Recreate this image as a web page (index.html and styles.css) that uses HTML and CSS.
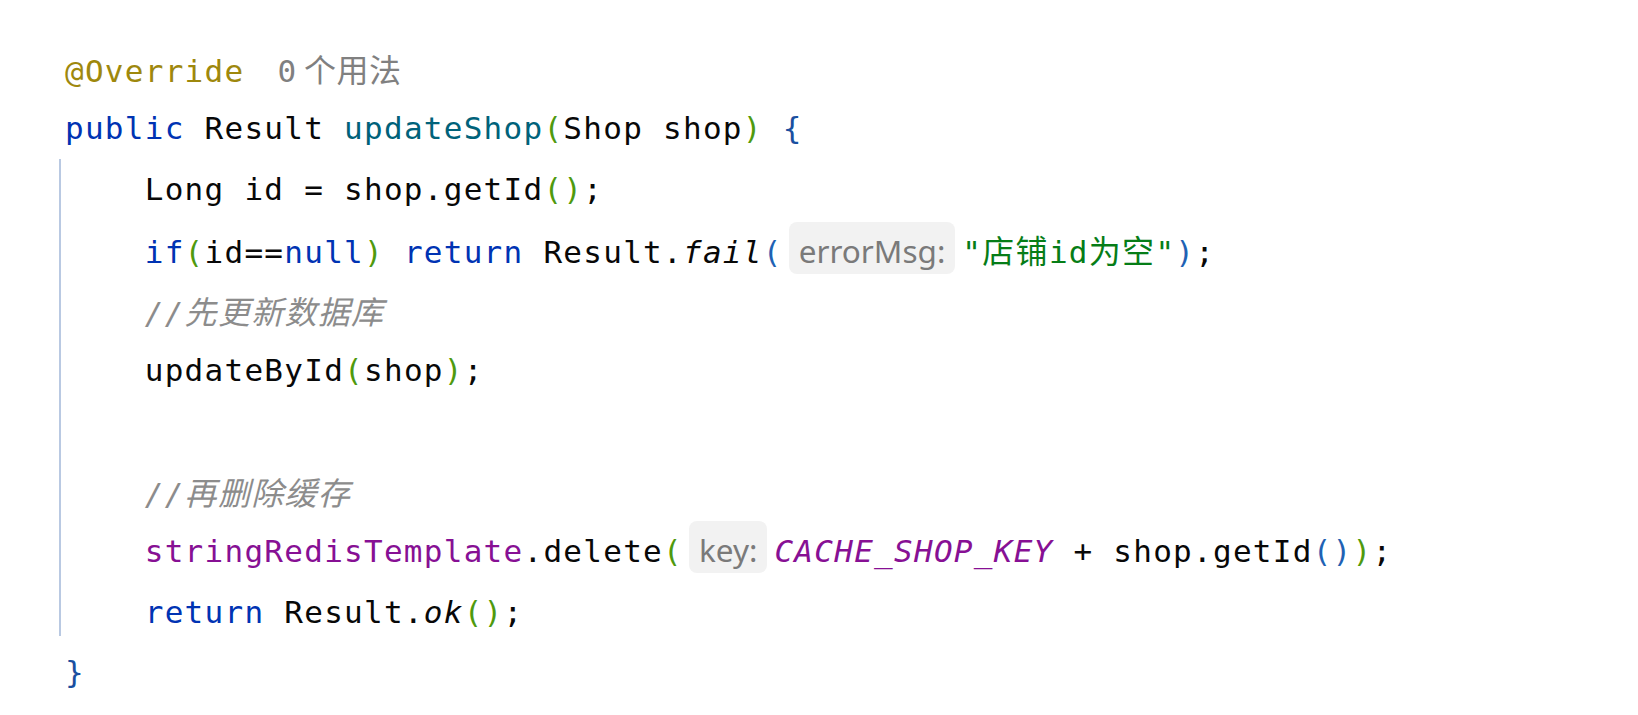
FILE: index.html
```html
<!DOCTYPE html>
<html lang="zh-CN">
<head>
<meta charset="utf-8">
<title>updateShop</title>
<link rel="stylesheet" href="styles.css">
</head>
<body>
<div class="editor">
  <div class="line"><span class="ann">@Override</span><span class="usages">0<span class="cjk">个用法</span></span></div>
  <div class="line"><span class="kw">public</span> Result <span class="decl">updateShop</span><span class="pg">(</span>Shop shop<span class="pg">)</span> <span class="brace">{</span></div>
  <div class="block">
    <div class="guide"></div>
    <div class="lines">
      <div class="line">    Long id = shop.getId<span class="pg">()</span>;</div>
      <div class="line">    <span class="kw">if</span><span class="pg">(</span>id==<span class="kw">null</span><span class="pg">)</span> <span class="kw">return</span> Result.<span class="it">fail</span><span class="pb">(</span><span class="hint">errorMsg:</span><span class="str">"<span class="cjk">店铺</span>id<span class="cjk">为空</span>"</span><span class="pb">)</span>;</div>
      <div class="line">    <span class="cmt">//<span class="cjk">先更新数据库</span></span></div>
      <div class="line">    updateById<span class="pg">(</span>shop<span class="pg">)</span>;</div>
      <div class="line"> </div>
      <div class="line">    <span class="cmt">//<span class="cjk">再删除缓存</span></span></div>
      <div class="line">    <span class="field">stringRedisTemplate</span>.delete<span class="pg">(</span><span class="hint">key:</span><span class="const">CACHE_SHOP_KEY</span> + shop.getId<span class="pb">()</span><span class="pg">)</span>;</div>
      <div class="line">    <span class="kw">return</span> Result.<span class="it">ok</span><span class="pg">()</span>;</div>
    </div>
  </div>
  <div class="line"><span class="brace">}</span></div>
</div>
</body>
</html>
```
FILE: styles.css
```css
html, body {
  margin: 0;
  padding: 0;
  background: #ffffff;
}

.editor {
  padding: 38px 0 0 65px;
  font-family: "DejaVu Sans Mono", "Noto Sans CJK SC", monospace;
  font-size: 31px;
  letter-spacing: 1.27px;
  color: #080808;
}

.line {
  height: 60.4px;
  line-height: 60.4px;
  white-space: pre;
}

.block {
  display: flex;
  margin-left: -6px;
}

.guide {
  width: 2px;
  background: #b9c9e2;
  margin-bottom: 6px;
  margin-right: 4px;
  flex: none;
}

.lines {
  flex: 1;
}

.cjk {
  font-family: "Noto Sans CJK SC", sans-serif;
  font-size: 32px;
  letter-spacing: 1.3px;
}

.ann { color: #9e880d; }

.usages {
  color: #808080;
  margin-left: 33px;
  letter-spacing: 0;
}
.usages .cjk {
  letter-spacing: 0.5px;
  font-size: 32px;
  margin-left: 8px;
}

.kw { color: #0033b3; }
.decl { color: #00627a; }
.pg { color: #4f9a0e; }
.pb { color: #1f62b4; }
.brace { color: #1a4fa0; }
.str { color: #067d17; }
.cmt { color: #8c8c8c; font-style: italic; }
.field { color: #871094; }
.const { color: #871094; font-style: italic; }
.it { font-style: italic; }

.hint {
  display: inline-block;
  vertical-align: baseline;
  font-family: "Noto Sans", sans-serif;
  font-size: 31.5px;
  letter-spacing: 0;
  line-height: 31px;
  color: #7a7a7a;
  background: #f2f2f2;
  border-radius: 8px;
  padding: 13px 10px 8px 10px;
  margin: 0 7px 0 6px;
}
```
